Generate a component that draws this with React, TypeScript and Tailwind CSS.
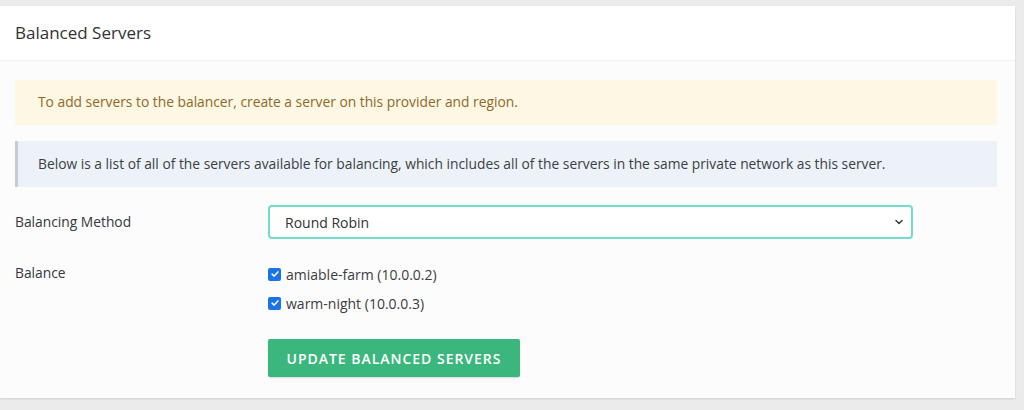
import { ChevronDown } from "lucide-react";

const SERVERS = [
  { name: "amiable-farm", ip: "10.0.0.2" },
  { name: "warm-night", ip: "10.0.0.3" },
];

function CheckedBox() {
  return (
    <span className="w-[13px] h-[13px] rounded-[2px] bg-[#1a73e8] grid place-items-center shrink-0">
      <svg viewBox="0 0 12 12" className="w-[10px] h-[10px]">
        <path d="M2.5 6.2 L5 8.5 L9.5 3.5" fill="none" stroke="white" strokeWidth="1.8" strokeLinecap="round" strokeLinejoin="round" />
      </svg>
    </span>
  );
}

export default function App() {
  return (
    <div className="w-[1024px] h-[410px] bg-[#ebebeb] pt-[6px] pr-[9px] font-['Open_Sans',sans-serif] text-[#3c4043]">
      <div className="bg-white h-[392px] flex flex-col shadow-[0_1px_2px_rgba(0,0,0,0.12)]">
        <div className="h-[55px] flex items-center px-[15px] border-b border-[#f1f1f1]">
          <h2 className="text-[17px] text-[#2f3236]">Balanced Servers</h2>
        </div>
        <div className="flex-1 bg-[#fcfcfc] px-[15px] pt-[19px] pr-[18px]">
          <div className="h-[45px] bg-[#fef7e3] flex items-center px-[23px] text-[13.8px] text-[#8d6a2c]">
            To add servers to the balancer, create a server on this provider and region.
          </div>
          <div className="mt-[16px] h-[46px] bg-[#edf2f8] border-l-[3px] border-[#c5cbd3] flex items-center px-[20px] text-[13.8px] text-[#3a3f45]">
            Below is a list of all of the servers available for balancing, which includes all of the servers in the same private network as this server.
          </div>
          <div className="mt-[18px] flex items-center">
            <div className="w-[253px] text-[13.8px] text-[#34383c]">Balancing Method</div>
            <div className="w-[645px] h-[34px] border-2 border-[#74dbcf] rounded-[4px] bg-white flex items-center justify-between pl-[15px] pr-[6px] text-[14px] text-[#303338]">
              <span>Round Robin</span>
              <ChevronDown className="w-[12px] h-[12px] text-[#3a3d42]" strokeWidth={3} />
            </div>
          </div>
          <div className="mt-[24px] flex">
            <div className="w-[253px] text-[13.8px] text-[#34383c]">Balance</div>
            <div className="flex flex-col pt-[2px]">
              <div className="flex flex-col gap-[11px]">
                {SERVERS.map((s) => (
                  <label key={s.name} className="flex items-center gap-[5px] text-[14px] text-[#3a3d42] h-[18px]">
                    <CheckedBox />
                    <span>
                      {s.name} ({s.ip})
                    </span>
                  </label>
                ))}
              </div>
              <button className="mt-[27px] w-[252px] h-[38px] bg-[#3bb77e] rounded-[2px] text-white text-[14px] font-semibold tracking-[0.07em] shadow-[0_1px_2px_rgba(0,0,0,0.15)]">
                UPDATE BALANCED SERVERS
              </button>
            </div>
          </div>
        </div>
      </div>
    </div>
  );
}
